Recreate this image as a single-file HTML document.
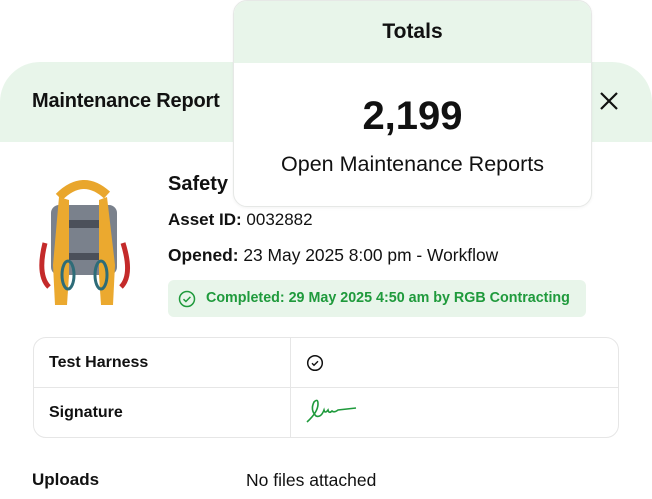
<!DOCTYPE html>
<html><head><style>
*{margin:0;padding:0;box-sizing:border-box}
body{width:652px;height:499px;background:#fff;font-family:"Liberation Sans",sans-serif;color:#111;position:relative;overflow:hidden}
.hdr{position:absolute;left:0;top:62px;width:652px;height:80px;background:#e8f5ea;border-radius:40px 40px 0 0}
.abs{position:absolute;white-space:nowrap}
.card{position:absolute;left:233px;top:0;width:359px;height:207px;background:#fff;border:1.5px solid #e6e8e6;border-radius:14px;overflow:hidden;box-shadow:0 1px 3px rgba(0,0,0,.05)}
.card .top{height:62px;background:#e8f5ea;text-align:center;font-weight:bold;font-size:21px;line-height:62px}
.tbl{position:absolute;left:33px;top:337px;width:586px;height:101px;border:1px solid #e6e6e6;border-radius:13px}
</style></head><body>
<div class="hdr"></div>
<div class="abs" style="left:32px;top:90px;font-size:20px;font-weight:bold;letter-spacing:-0.2px">Maintenance Report</div>
<svg class="abs" style="left:598px;top:90px" width="22" height="22" viewBox="0 0 22 22"><path d="M3 3L19 19M19 3L3 19" stroke="#111" stroke-width="2.2"/></svg>

<svg class="abs" style="left:35px;top:175px" width="100" height="135" viewBox="0 0 100 135">
<path d="M24 22 Q48 -2 72 20" stroke="#e9a62c" stroke-width="9" fill="none"/>
<rect x="16" y="30" width="66" height="70" rx="8" fill="#7a818c"/>
<rect x="30" y="45" width="36" height="8" fill="#4b505a"/>
<rect x="30" y="78" width="36" height="7" fill="#4b505a"/>
<path d="M24 22 L18 90 L20 130 L32 130 L34 100 L34 25Z" fill="#eba92f"/>
<path d="M72 22 L80 90 L78 130 L66 130 L64 100 L64 25Z" fill="#eba92f"/>
<path d="M10 68 Q2 100 14 112" stroke="#c42a2a" stroke-width="5" fill="none"/>
<path d="M88 68 Q98 100 86 112" stroke="#c42a2a" stroke-width="5" fill="none"/>
<ellipse cx="33" cy="100" rx="6" ry="14" stroke="#2e6c78" stroke-width="3" fill="none"/>
<ellipse cx="66" cy="100" rx="6" ry="14" stroke="#2e6c78" stroke-width="3" fill="none"/>
</svg>

<div class="abs" style="left:168px;top:173px;font-size:20px;font-weight:bold">Safety</div>
<div class="abs" style="left:168px;top:210px;font-size:17px"><b>Asset ID:</b> 0032882</div>
<div class="abs" style="left:168px;top:245px;font-size:17.4px"><b>Opened:</b> 23 May 2025 8:00 pm - Workflow</div>
<div class="abs" style="left:168px;top:280px;width:418px;height:37px;background:#e8f5ea;border-radius:6px"></div>
<svg class="abs" style="left:178px;top:290px" width="18" height="18" viewBox="0 0 18 18"><circle cx="9" cy="9" r="7.5" stroke="#1f9a3c" stroke-width="1.5" fill="none"/><path d="M5.5 9.2l2.4 2.3 4.5-4.6" stroke="#1f9a3c" stroke-width="1.5" fill="none"/></svg>
<div class="abs" style="left:206px;top:290px;font-size:14.3px;font-weight:bold;color:#1f9a3c">Completed: 29 May 2025 4:50 am by RGB Contracting</div>

<div class="card"><div class="top">Totals</div>
<div style="text-align:center;font-weight:bold;font-size:40px;margin-top:31px;line-height:44px">2,199</div>
<div style="text-align:center;font-size:21.5px;margin-top:14px">Open Maintenance Reports</div>
</div>

<div class="tbl">
<div style="position:absolute;left:0;right:0;top:49px;border-top:1px solid #e6e6e6"></div>
<div style="position:absolute;left:256px;top:0;bottom:0;border-left:1px solid #e6e6e6"></div>
<div class="abs" style="left:15px;top:16px;font-size:16px;font-weight:bold">Test Harness</div>
<div class="abs" style="left:15px;top:66px;font-size:16px;font-weight:bold">Signature</div>
<svg class="abs" style="left:272px;top:16px" width="18" height="18" viewBox="0 0 18 18"><circle cx="9" cy="9" r="7.3" stroke="#111" stroke-width="1.5" fill="none"/><path d="M6 9.2l2 2 4-4" stroke="#111" stroke-width="1.4" fill="none"/></svg>
<svg class="abs" style="left:270px;top:58px" width="60" height="30" viewBox="0 0 60 30"><path d="M3 26 Q14 16 14 8 Q14 2 10 6 Q6 14 12 20 Q17 22 20 14 Q21 18 24 14 Q25 18 28 15 Q30 17 34 14 L52 12" stroke="#1f9a3c" stroke-width="1.6" fill="none"/></svg>
</div>

<div class="abs" style="left:32px;top:470px;font-size:17px;font-weight:bold">Uploads</div>
<div class="abs" style="left:246px;top:470px;font-size:17.5px">No files attached</div>
</body></html>
